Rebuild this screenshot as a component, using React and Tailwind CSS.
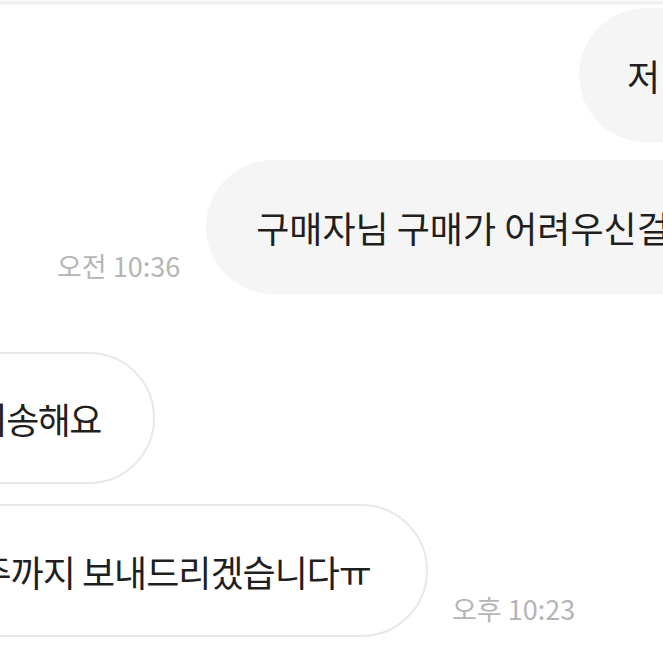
import React from "react";

const font = { fontFamily: '"Noto Sans CJK KR", "Noto Sans", sans-serif' };

const Time = ({ children }) => (
  <span className="shrink-0 whitespace-nowrap text-[27px] leading-none text-[#b5b5b5] mb-[15px]">
    {children}
  </span>
);

const App = () => {
  return (
    <div
      className="w-[663px] h-[663px] overflow-hidden bg-white text-[#1f1f1f]"
      style={font}
    >
      {/* top divider */}
      <div className="h-[5px] bg-gradient-to-b from-[#fafafa] via-[#efefef] to-[#f6f6f6]" />

      {/* outgoing, first of group */}
      <div className="flex mt-[3px] pl-[579px]">
        <div className="shrink-0 h-[134px] flex items-center pl-[48px] pr-[50px] rounded-full bg-[#f5f5f5] whitespace-nowrap text-[36px]">
          저 혹시
        </div>
      </div>

      {/* outgoing, with time */}
      <div className="flex items-end gap-[26px] mt-[18px] pl-[57px]">
        <Time>오전 10:36</Time>
        <div className="shrink-0 h-[134px] flex items-center pl-[50px] pr-[50px] rounded-full bg-[#f5f5f5] whitespace-nowrap text-[36px]">
          구매자님 구매가 어려우신걸로 알겠습니다
        </div>
      </div>

      {/* incoming */}
      <div className="flex justify-end w-[155px] mt-[58px]">
        <div className="shrink-0 h-[132px] flex items-center pl-[50px] pr-[52px] rounded-full bg-white border-2 border-[#e8e8e8] whitespace-nowrap text-[36px] tracking-[-1.5px]">
          정말 죄송해요
        </div>
      </div>

      {/* incoming, with time */}
      <div className="flex items-end mt-[20px]">
        <div className="flex justify-end w-[428px] shrink-0">
          <div className="shrink-0 h-[133px] flex items-center pl-[50px] pr-[55px] rounded-full bg-white border-2 border-[#e8e8e8] whitespace-nowrap text-[36px] tracking-[-1px]">
            이번주까지 보내드리겠습니다ㅠ
          </div>
        </div>
        <span className="ml-[24px] flex">
          <Time>오후 10:23</Time>
        </span>
      </div>
    </div>
  );
};

export default App;
